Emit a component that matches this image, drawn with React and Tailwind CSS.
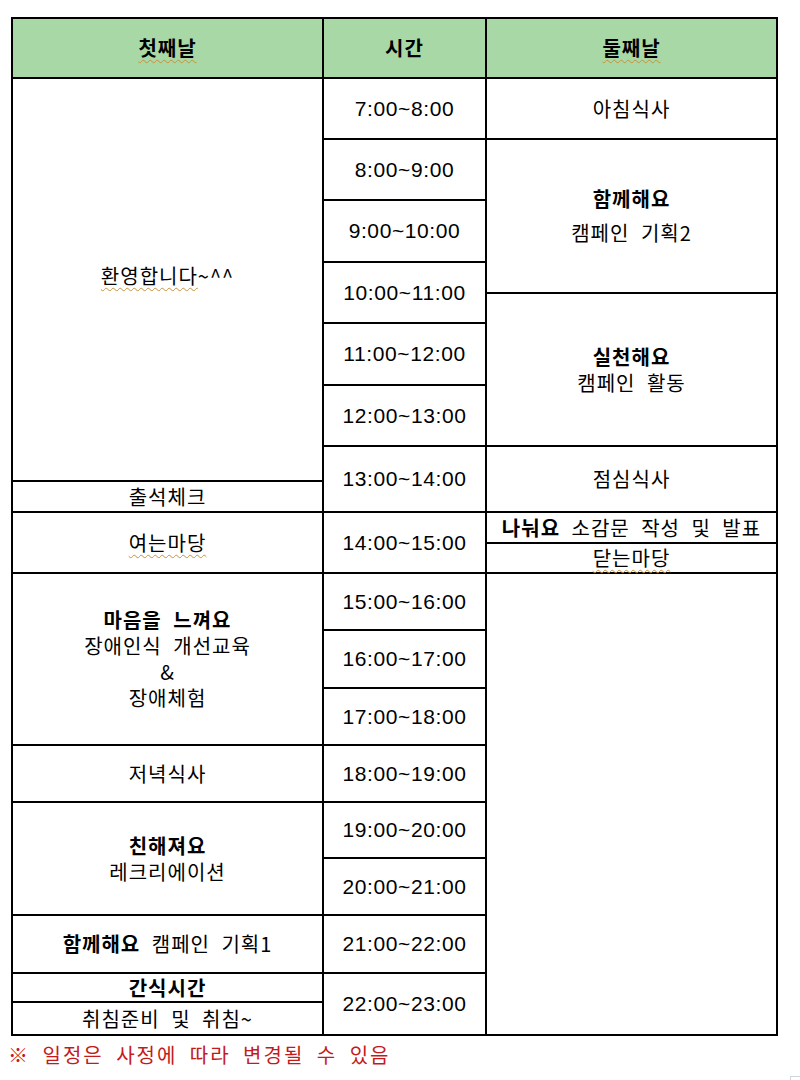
const ko = "font-['Noto_Sans_CJK_KR','Noto_Sans',sans-serif] text-[20px] leading-[26px] tracking-[1px] [word-spacing:6px] text-black";
const tm = "font-['Liberation_Sans',sans-serif] text-[21px] tracking-[0.6px] text-black";
const squiggle = "underline decoration-wavy decoration-[#c8903a] decoration-1 underline-offset-[3px]";

function Cell({ className = "", children }) {
  return (
    <div className={`bg-white flex flex-col items-center justify-center text-center ${className}`}>
      {children}
    </div>
  );
}

const times = [
  ["7:00~8:00", "row-start-2 row-span-1"],
  ["8:00~9:00", "row-start-3 row-span-1"],
  ["9:00~10:00", "row-start-4 row-span-1"],
  ["10:00~11:00", "row-start-5 row-span-2"],
  ["11:00~12:00", "row-start-7 row-span-1"],
  ["12:00~13:00", "row-start-8 row-span-1"],
  ["13:00~14:00", "row-start-9 row-span-2"],
  ["14:00~15:00", "row-start-11 row-span-2"],
  ["15:00~16:00", "row-start-13 row-span-1"],
  ["16:00~17:00", "row-start-14 row-span-1"],
  ["17:00~18:00", "row-start-15 row-span-1"],
  ["18:00~19:00", "row-start-16 row-span-1"],
  ["19:00~20:00", "row-start-17 row-span-1"],
  ["20:00~21:00", "row-start-18 row-span-1"],
  ["21:00~22:00", "row-start-19 row-span-1"],
  ["22:00~23:00", "row-start-20 row-span-2"],
];

export default function App() {
  return (
    <div className="w-[800px] h-[1080px] bg-white pt-[17px] pl-[11px]">
      <div className="grid w-[767px] border-2 border-black bg-black gap-[2px] grid-cols-[309px_161px_289px] grid-rows-[58px_59px_59px_60px_29px_28px_60px_59px_33px_29px_29px_28px_55px_56px_55px_55px_54px_55px_56px_27px_31px]">
        {/* header */}
        <div className="col-start-1 row-start-1 bg-[#a8d8a6] flex items-center justify-center">
          <span className={`${ko} font-bold ${squiggle}`}>첫째날</span>
        </div>
        <div className="col-start-2 row-start-1 bg-[#a8d8a6] flex items-center justify-center">
          <span className={`${ko} font-bold`}>시간</span>
        </div>
        <div className="col-start-3 row-start-1 bg-[#a8d8a6] flex items-center justify-center">
          <span className={`${ko} font-bold ${squiggle}`}>둘째날</span>
        </div>

        {/* first day */}
        <Cell className="col-start-1 row-start-2 row-span-8 pb-[8px]">
          <span className={ko}><span className={squiggle}>환영합니다</span>~^^</span>
        </Cell>
        <Cell className="col-start-1 row-start-10 row-span-1">
          <span className={ko}>출석체크</span>
        </Cell>
        <Cell className="col-start-1 row-start-11 row-span-2">
          <span className={`${ko} ${squiggle}`}>여는마당</span>
        </Cell>
        <Cell className="col-start-1 row-start-13 row-span-3">
          <span className={`${ko} font-bold`}>마음을 느껴요</span>
          <span className={ko}>장애인식 개선교육</span>
          <span className={ko}>&amp;</span>
          <span className={ko}>장애체험</span>
        </Cell>
        <Cell className="col-start-1 row-start-16 row-span-1">
          <span className={ko}>저녁식사</span>
        </Cell>
        <Cell className="col-start-1 row-start-17 row-span-2">
          <span className={`${ko} font-bold`}>친해져요</span>
          <span className={ko}>레크리에이션</span>
        </Cell>
        <Cell className="col-start-1 row-start-19 row-span-1">
          <span className={ko}><b>함께해요</b> 캠페인 기획1</span>
        </Cell>
        <Cell className="col-start-1 row-start-20 row-span-1">
          <span className={`${ko} font-bold`}>간식시간</span>
        </Cell>
        <Cell className="col-start-1 row-start-21 row-span-1">
          <span className={ko}>취침준비 및 취침~</span>
        </Cell>

        {/* time */}
        {times.map(([t, pos]) => (
          <Cell key={t} className={`col-start-2 ${pos}`}>
            <span className={tm}>{t}</span>
          </Cell>
        ))}

        {/* second day */}
        <Cell className="col-start-3 row-start-2 row-span-1">
          <span className={ko}>아침식사</span>
        </Cell>
        <Cell className="col-start-3 row-start-3 row-span-3 gap-[8px]">
          <span className={`${ko} font-bold`}>함께해요</span>
          <span className={ko}>캠페인 기획2</span>
        </Cell>
        <Cell className="col-start-3 row-start-6 row-span-3">
          <span className={`${ko} font-bold`}>실천해요</span>
          <span className={ko}>캠페인 활동</span>
        </Cell>
        <Cell className="col-start-3 row-start-9 row-span-2">
          <span className={ko}>점심식사</span>
        </Cell>
        <Cell className="col-start-3 row-start-11 row-span-1">
          <span className={ko}><b>나눠요</b> 소감문 작성 및 발표</span>
        </Cell>
        <Cell className="col-start-3 row-start-12 row-span-1">
          <span className={`${ko} ${squiggle}`}>닫는마당</span>
        </Cell>
        <Cell className="col-start-3 row-start-13 row-span-9" />
      </div>

      <p className="mt-[4px] -ml-[3px] font-['Noto_Sans_CJK_KR','Noto_Sans',sans-serif] text-[20px] leading-[30px] tracking-[2px] [word-spacing:6px] text-[#c41a1a]">
        ※ 일정은 사정에 따라 변경될 수 있음
      </p>

      <div className="flex justify-end mt-[6px]">
        <div className="w-[10px] h-[8px] border-l border-t border-gray-300" />
      </div>
    </div>
  );
}
